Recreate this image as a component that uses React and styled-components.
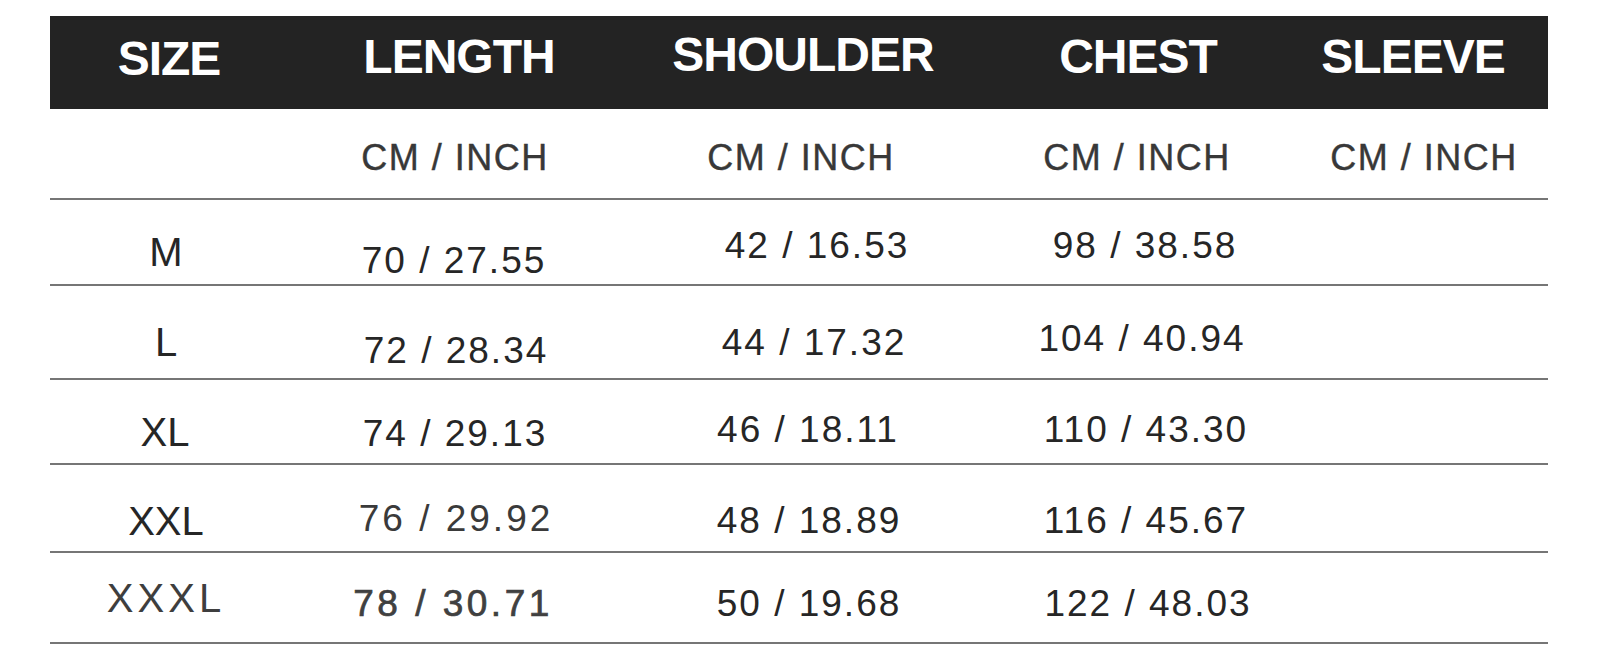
import React from 'react';
import styled, { createGlobalStyle } from 'styled-components';

const GlobalStyle = createGlobalStyle`
  html, body {
    margin: 0;
    padding: 0;
    background: #ffffff;
  }
  body {
    font-family: "Liberation Sans", Arial, sans-serif;
  }
`;

const COLUMNS = '232px 348px 350px 320px 248px';

const Page = styled.div`
  padding: 16px 52px 0 50px;
  width: 1600px;
  box-sizing: border-box;
`;

const Table = styled.div`
  width: 1498px;
  display: flex;
  flex-direction: column;
`;

const HeaderBar = styled.div`
  display: grid;
  grid-template-columns: ${COLUMNS};
  height: 93px;
  background: #232323;
  align-items: center;
`;

const HeaderCell = styled.div`
  text-align: center;
  color: #ffffff;
  font-weight: 700;
  font-size: 48px;
  line-height: 1;
  letter-spacing: -1px;
  transform: translate(${(p) => p.$dx || 0}px, ${(p) => p.$dy || 0}px);
`;

const Row = styled.div`
  display: grid;
  grid-template-columns: ${COLUMNS};
  align-items: center;
  height: ${(p) => p.$h}px;
  box-sizing: border-box;
  border-bottom: 2px solid #767676;
`;

const UnitCell = styled.div`
  text-align: center;
  color: #383838;
  font-size: 36px;
  line-height: 1;
  letter-spacing: 1.5px;
  -webkit-text-stroke: 0.4px #383838;
  transform: translate(${(p) => p.$dx || 0}px, ${(p) => p.$dy || 0}px);
`;

const SizeCell = styled.div`
  text-align: center;
  font-size: 40px;
  line-height: 1;
  color: ${(p) => (p.$tone === 'soft' ? '#3e3e3e' : '#262626')};
  letter-spacing: ${(p) => (p.$tone === 'soft' ? '4px' : '0')};
  transform: translate(${(p) => p.$dx || 0}px, ${(p) => p.$dy || 0}px);
`;

const ValueCell = styled.div`
  text-align: center;
  font-size: 37px;
  line-height: 1;
  white-space: nowrap;
  letter-spacing: ${(p) => (p.$tone === 'strong' ? '3.5px' : p.$tone === 'light' ? '3px' : '2px')};
  color: ${(p) =>
    p.$tone === 'light' ? '#3a3a3a' : p.$tone === 'strong' ? '#404040' : '#262626'};
  -webkit-text-stroke: ${(p) => (p.$tone === 'strong' ? '0.7px #404040' : '0')};
  transform: translate(${(p) => p.$dx || 0}px, ${(p) => p.$dy || 0}px);
`;

const headers = [
  { label: 'SIZE', dx: 3, dy: -4 },
  { label: 'LENGTH', dx: 3, dy: -6 },
  { label: 'SHOULDER', dx: -2, dy: -8 },
  { label: 'CHEST', dx: -2, dy: -6 },
  { label: 'SLEEVE', dx: -11, dy: -6 },
];

const units = [
  { dx: -1 },
  { dx: -4 },
  { dx: -3 },
  { dx: 0 },
];

const rows = [
  {
    h: 86,
    size: { text: 'M', dy: 10 },
    values: [
      { text: '70 / 27.55', dx: -2, dy: 18 },
      { text: '42 / 16.53', dx: 12, dy: 3 },
      { text: '98 / 38.58', dx: 5, dy: 3 },
    ],
  },
  {
    h: 94,
    size: { text: 'L', dy: 10 },
    values: [
      { text: '72 / 28.34', dx: 0, dy: 18 },
      { text: '44 / 17.32', dx: 9, dy: 10 },
      { text: '104 / 40.94', dx: 2, dy: 6 },
    ],
  },
  {
    h: 85,
    size: { text: 'XL', dx: -1, dy: 10 },
    values: [
      { text: '74 / 29.13', dx: -1, dy: 12 },
      { text: '46 / 18.11', dx: 3, dy: 8 },
      { text: '110 / 43.30', dx: 6, dy: 8 },
    ],
  },
  {
    h: 88,
    size: { text: 'XXL', dy: 13 },
    values: [
      { text: '76 / 29.92', dx: 0, dy: 10, tone: 'light' },
      { text: '48 / 18.89', dx: 4, dy: 12 },
      { text: '116 / 45.67', dx: 6, dy: 12 },
    ],
  },
  {
    h: 91,
    size: { text: 'XXXL', dy: 0, tone: 'soft' },
    values: [
      { text: '78 / 30.71', dx: -3, dy: 6, tone: 'strong' },
      { text: '50 / 19.68', dx: 4, dy: 6 },
      { text: '122 / 48.03', dx: 8, dy: 6 },
    ],
  },
];

const App = () => {
  return (
    <Page>
      <GlobalStyle />
      <Table>
        <HeaderBar>
          {headers.map((h) => (
            <HeaderCell key={h.label} $dx={h.dx} $dy={h.dy}>
              {h.label}
            </HeaderCell>
          ))}
        </HeaderBar>

        <Row $h={91}>
          <div />
          {units.map((u, i) => (
            <UnitCell key={i} $dx={u.dx} $dy={4}>
              CM / INCH
            </UnitCell>
          ))}
        </Row>

        {rows.map((row) => (
          <Row key={row.size.text} $h={row.h}>
            <SizeCell $dx={row.size.dx} $dy={row.size.dy} $tone={row.size.tone}>
              {row.size.text}
            </SizeCell>
            {row.values.map((v) => (
              <ValueCell key={v.text} $dx={v.dx} $dy={v.dy} $tone={v.tone}>
                {v.text}
              </ValueCell>
            ))}
            <div />
          </Row>
        ))}
      </Table>
    </Page>
  );
};

export default App;
